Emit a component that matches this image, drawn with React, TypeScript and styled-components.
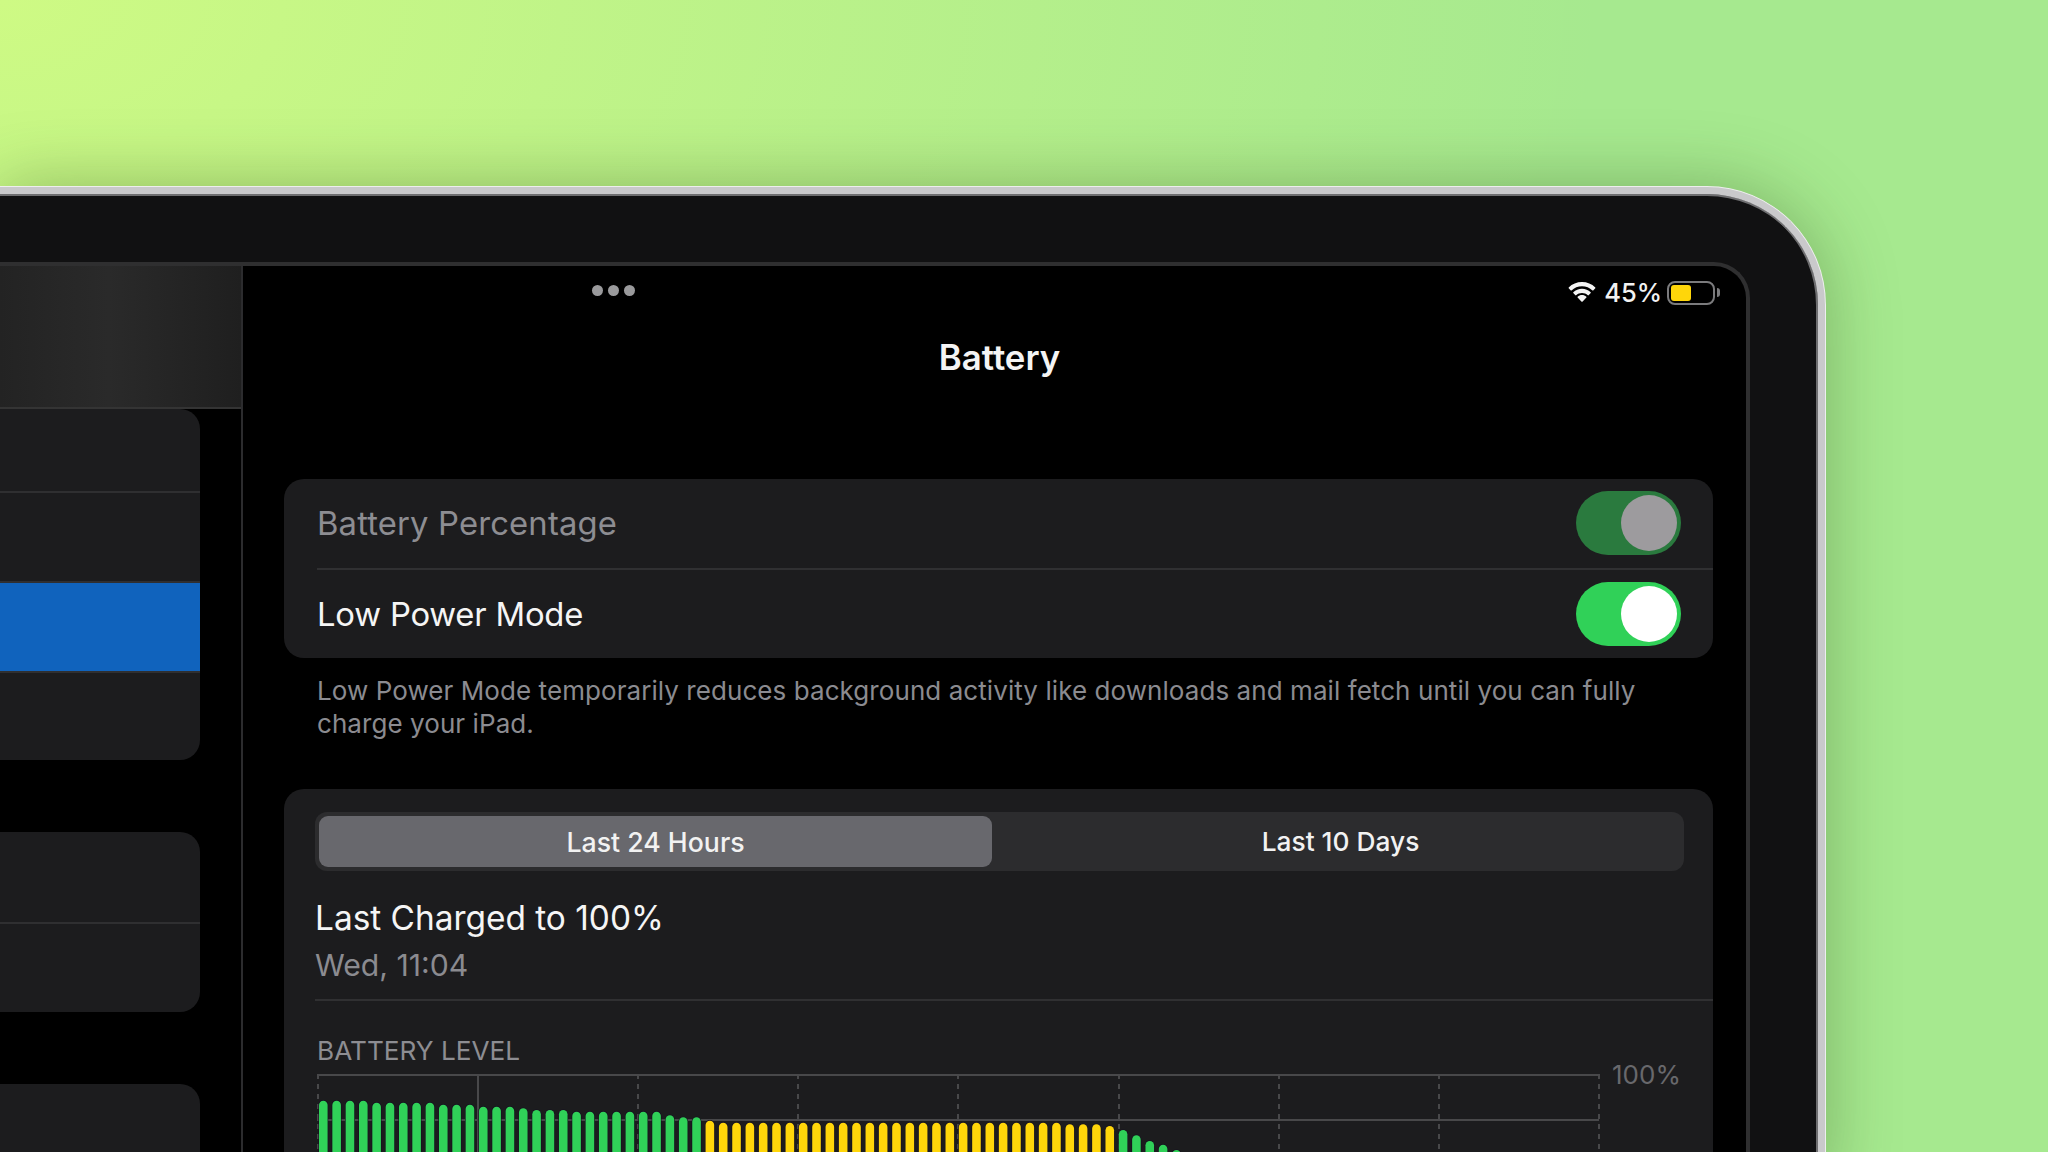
import styled, { createGlobalStyle } from 'styled-components';

const GlobalStyle = createGlobalStyle`
	html, body {
		margin: 0;
		padding: 0;
		background: #a6e98f;
	}
	body {
		font-family: Inter, "Noto Sans", "Liberation Sans", sans-serif;
	}
`;

const Page = styled.div`
	width: 2048px;
	height: 1152px;
	overflow: hidden;
	padding-top: 187px;
	box-sizing: border-box;
	background:
		radial-gradient(ellipse 1600px 950px at 0 0, #cefa84 0%, rgba(206, 250, 132, 0) 100%),
		#a6e98f;
`;

const Device = styled.div`
	width: 1825px;
	height: 1000px;
	box-sizing: border-box;
	padding: 68px 68px 0 0;
	background: #111112;
	border-top: 7px solid #c9c9cb;
	border-right: 7px solid #c9c9cb;
	border-top-right-radius: 118px;
	box-shadow:
		inset 0 2px 0 #6e6e70,
		inset -2px 0 0 #6e6e70,
		0 -1px 0 #eeeeee,
		1px 0 0 #eeeeee,
		0 0 70px rgba(40, 70, 20, 0.35);
`;

const Screen = styled.div`
	display: flex;
	height: 100%;
	background: #000;
	border-top: 4px solid #2f2f30;
	border-right: 4px solid #2f2f30;
	border-top-right-radius: 36px;
	overflow: hidden;
`;

const Sidebar = styled.div`
	width: 243px;
	flex: none;
	border-right: 2px solid #2c2c2e;
	box-sizing: border-box;
	display: flex;
	flex-direction: column;
`;

const SideHeader = styled.div`
	height: 141px;
	flex: none;
	background: linear-gradient(90deg, #232323 0%, #2a2a2a 45%, #1f1f1f 100%);
	border-bottom: 2px solid #343434;
`;

const SideCard = styled.div`
	width: 200px;
	flex: none;
	margin-bottom: 72px;
	border-radius: 0 20px 20px 0;
	background: #1c1c1e;
	overflow: hidden;
`;

const SideRow = styled.div<{ $h: number; $active?: boolean }>`
	height: ${(p) => p.$h}px;
	box-sizing: border-box;
	background: ${(p) => (p.$active ? '#1063bd' : 'transparent')};
	& + & {
		border-top: 2px solid #2f2f31;
	}
`;

const Main = styled.div`
	flex: 1;
	display: flex;
	flex-direction: column;
	min-width: 0;
`;

const TopBar = styled.div`
	height: 48px;
	flex: none;
	display: flex;
	align-items: center;
	padding: 0 31px 0 349px;
`;

const Dots = styled.div`
	display: flex;
	gap: 5px;
`;

const Dot = styled.span`
	width: 11px;
	height: 11px;
	border-radius: 50%;
	background: #9a9a9c;
`;

const Status = styled.div`
	margin: 5px 0 0 auto;
	display: flex;
	align-items: center;
	color: #f2f2f2;
	font-size: 25.5px;
	font-weight: 500;
`;

const Percent = styled.span`
	margin: 0 5px 0 7px;
`;

const BatteryShell = styled.div`
	width: 48px;
	height: 24px;
	box-sizing: border-box;
	border: 2px solid #7b7b7d;
	border-radius: 8px;
	padding: 2px;
	position: relative;
	&::after {
		content: '';
		position: absolute;
		right: -7px;
		top: 5px;
		width: 3px;
		height: 9px;
		border-radius: 0 3px 3px 0;
		background: #7b7b7d;
	}
`;

const BatteryFill = styled.div`
	width: 20px;
	height: 100%;
	border-radius: 3px;
	background: #ffd60a;
`;

const Content = styled.div`
	margin: 0 33px 0 41px;
	display: flex;
	flex-direction: column;
`;

const Title = styled.h1`
	margin: 18px 0 97px;
	padding-left: 2px;
	height: 50px;
	line-height: 50px;
	text-align: center;
	color: #f4f4f4;
	font-size: 34.8px;
	font-weight: 600;
`;

const GroupCard = styled.div`
	background: #1c1c1e;
	border-radius: 20px;
	overflow: hidden;
`;

const SettingRow = styled.div`
	height: 88.5px;
	box-sizing: border-box;
	display: flex;
	align-items: center;
	justify-content: space-between;
	padding: 0 32px 0 33px;
`;

const RowDivider = styled.div`
	height: 2px;
	margin-left: 33px;
	background: #303032;
`;

const RowLabel = styled.span<{ $dim?: boolean }>`
	color: ${(p) => (p.$dim ? '#8d8d92' : '#f5f5f5')};
	font-size: 32.8px;
	font-weight: 400;
	letter-spacing: ${(p) => (p.$dim ? '0.15px' : '-0.2px')};
`;

const Toggle = styled.div<{ $dim?: boolean }>`
	width: 105px;
	height: 64px;
	box-sizing: border-box;
	padding: 4px;
	display: flex;
	justify-content: flex-end;
	border-radius: 32px;
	background: ${(p) => (p.$dim ? '#2a7a3e' : '#30d158')};
`;

const Knob = styled.span<{ $dim?: boolean }>`
	width: 56px;
	height: 56px;
	border-radius: 50%;
	background: ${(p) => (p.$dim ? '#9d9b9e' : '#ffffff')};
`;

const Footnote = styled.p`
	margin: 17px 0 49px 33px;
	width: 1345px;
	color: #8b8b90;
	font-size: 26px;
	letter-spacing: 0.07px;
	line-height: 32.5px;
`;

const StatsCard = styled(GroupCard)`
	padding: 23px 0 0 31px;
	height: 500px;
`;

const Segmented = styled.div`
	width: 1369px;
	height: 59px;
	box-sizing: border-box;
	padding: 4px;
	display: flex;
	border-radius: 12px;
	background: #2c2c2e;
`;

const Segment = styled.div<{ $active?: boolean }>`
	flex: ${(p) => (p.$active ? '0 0 673px' : '1')};
	display: flex;
	align-items: center;
	justify-content: center;
	padding-left: ${(p) => (p.$active ? '0' : '9px')};
	border-radius: 9px;
	color: #f2f2f2;
	font-size: ${(p) => (p.$active ? '26.7px' : '26.3px')};
	font-weight: 500;
	background: ${(p) => (p.$active ? '#68686d' : 'transparent')};
`;

const ChargeTitle = styled.div`
	margin-top: 27px;
	line-height: 40px;
	color: #f5f5f5;
	font-size: 33.4px;
	font-weight: 400;
`;

const ChargeTime = styled.div`
	margin-top: 7px;
	line-height: 40px;
	color: #8b8b90;
	font-size: 30.2px;
`;

const StatsDivider = styled.div`
	margin-top: 14px;
	height: 2px;
	background: #303032;
`;

const SectionLabel = styled.div`
	margin: 35px 0 8px 2px;
	line-height: 30px;
	color: #8d8d92;
	font-size: 26.2px;
`;

const ChartRow = styled.div`
	display: flex;
	margin-left: 2px;
`;

const ChartSvg = styled.svg`
	flex: none;
	display: block;
`;

const AxisLabel = styled.span`
	margin: -12px 0 0 12px;
	height: 26px;
	line-height: 26px;
	color: #68686c;
	font-size: 26px;
`;

// bar tops, read off the reference at 3x
const greenTops = [
	212, 212, 212, 212, 218, 218, 218, 218, 218, 224, 224, 224, 230, 230, 230, 235, 240, 240, 240, 245, 245, 245, 245,
	245, 245, 245, 256, 262, 262,
];
const yellowTops = [272, ...Array(26).fill(278), 283, 283, 283, 288];
const tailTops = [300, 316, 333, 344, 360];

const bars = [
	...greenTops.map((top) => ({ top, color: '#30d158' })),
	...yellowTops.map((top) => ({ top, color: '#ffd60a' })),
	...tailTops.map((top) => ({ top, color: '#30d158' })),
];

const gridX = [0, 160, 320, 480, 640, 801, 961, 1121, 1281];

const WifiIcon = () => (
	<svg width="30" height="22" viewBox="0 0 30 22" fill="#f5f5f5">
		<path d="M15 4.2c4 0 7.7 1.5 10.5 4.2.2.2.5.2.7 0l2.1-2.2c.2-.2.2-.6 0-.8C24.8 2 20.100 0 15 0S5.200 2 1.700 5.400c-.2.2-.2.6 0 .8l2.100 2.200c.2.2.5.2.7 0C7.300 5.700 11 4.200 15 4.200z" />
		<path d="M15 11c2.200 0 4.300.8 5.900 2.300.2.2.5.2.7 0l2.100-2.200c.2-.2.2-.6 0-.8C21.400 8 18.300 6.800 15 6.800s-6.400 1.200-8.700 3.500c-.2.2-.2.6 0 .8l2.100 2.200c.2.2.5.2.7 0C10.700 11.800 12.800 11 15 11z" />
		<path d="M19.400 15.600c.2-.2.2-.6 0-.8-1.200-1.100-2.800-1.700-4.400-1.700s-3.200.6-4.400 1.700c-.2.2-.2.6 0 .8l4 4.100c.2.2.6.2.8 0l4-4.100z" />
	</svg>
);

const BatteryChart = () => (
	<ChartSvg width="1283" height="80" viewBox="0 0 1283 80">
		<line x1="0" y1="1" x2="1282" y2="1" stroke="#48484a" strokeWidth="2" />
		<line x1="0" y1="46" x2="1282" y2="46" stroke="#48484a" strokeWidth="2" />
		{gridX.map((x, i) => (
			<line
				key={x}
				x1={x + 1}
				y1="0"
				x2={x + 1}
				y2="80"
				stroke="#48484a"
				strokeWidth="2"
				strokeDasharray={i === 1 ? undefined : '5 5'}
			/>
		))}
		{bars.map((bar, i) => {
			const y = bar.top / 3 - 44;
			return (
				<rect
					key={i}
					x={2 + i * 13.33}
					y={y}
					width="8.6"
					height={90 - y}
					rx="4.3"
					fill={bar.color}
					stroke="#151020"
					strokeWidth="1.2"
					paintOrder="stroke"
				/>
			);
		})}
	</ChartSvg>
);

const App = () => {
	return (
		<Page>
			<GlobalStyle />
			<Device>
				<Screen>
					<Sidebar>
						<SideHeader />
						<SideCard>
							<SideRow $h={82} />
							<SideRow $h={90} />
							<SideRow $h={90} $active />
							<SideRow $h={89} />
						</SideCard>
						<SideCard>
							<SideRow $h={90} />
							<SideRow $h={90} />
						</SideCard>
						<SideCard>
							<SideRow $h={90} />
						</SideCard>
					</Sidebar>
					<Main>
						<TopBar>
							<Dots>
								<Dot />
								<Dot />
								<Dot />
							</Dots>
							<Status>
								<WifiIcon />
								<Percent>45%</Percent>
								<BatteryShell>
									<BatteryFill />
								</BatteryShell>
							</Status>
						</TopBar>
						<Content>
							<Title>Battery</Title>
							<GroupCard>
								<SettingRow>
									<RowLabel $dim>Battery Percentage</RowLabel>
									<Toggle $dim>
										<Knob $dim />
									</Toggle>
								</SettingRow>
								<RowDivider />
								<SettingRow>
									<RowLabel>Low Power Mode</RowLabel>
									<Toggle>
										<Knob />
									</Toggle>
								</SettingRow>
							</GroupCard>
							<Footnote>
								Low Power Mode temporarily reduces background activity like downloads and mail fetch until you can fully
								charge your iPad.
							</Footnote>
							<StatsCard>
								<Segmented>
									<Segment $active>Last 24 Hours</Segment>
									<Segment>Last 10 Days</Segment>
								</Segmented>
								<ChargeTitle>Last Charged to 100%</ChargeTitle>
								<ChargeTime>Wed, 11:04</ChargeTime>
								<StatsDivider />
								<SectionLabel>BATTERY LEVEL</SectionLabel>
								<ChartRow>
									<BatteryChart />
									<AxisLabel>100%</AxisLabel>
								</ChartRow>
							</StatsCard>
						</Content>
					</Main>
				</Screen>
			</Device>
		</Page>
	);
};

export default App;
